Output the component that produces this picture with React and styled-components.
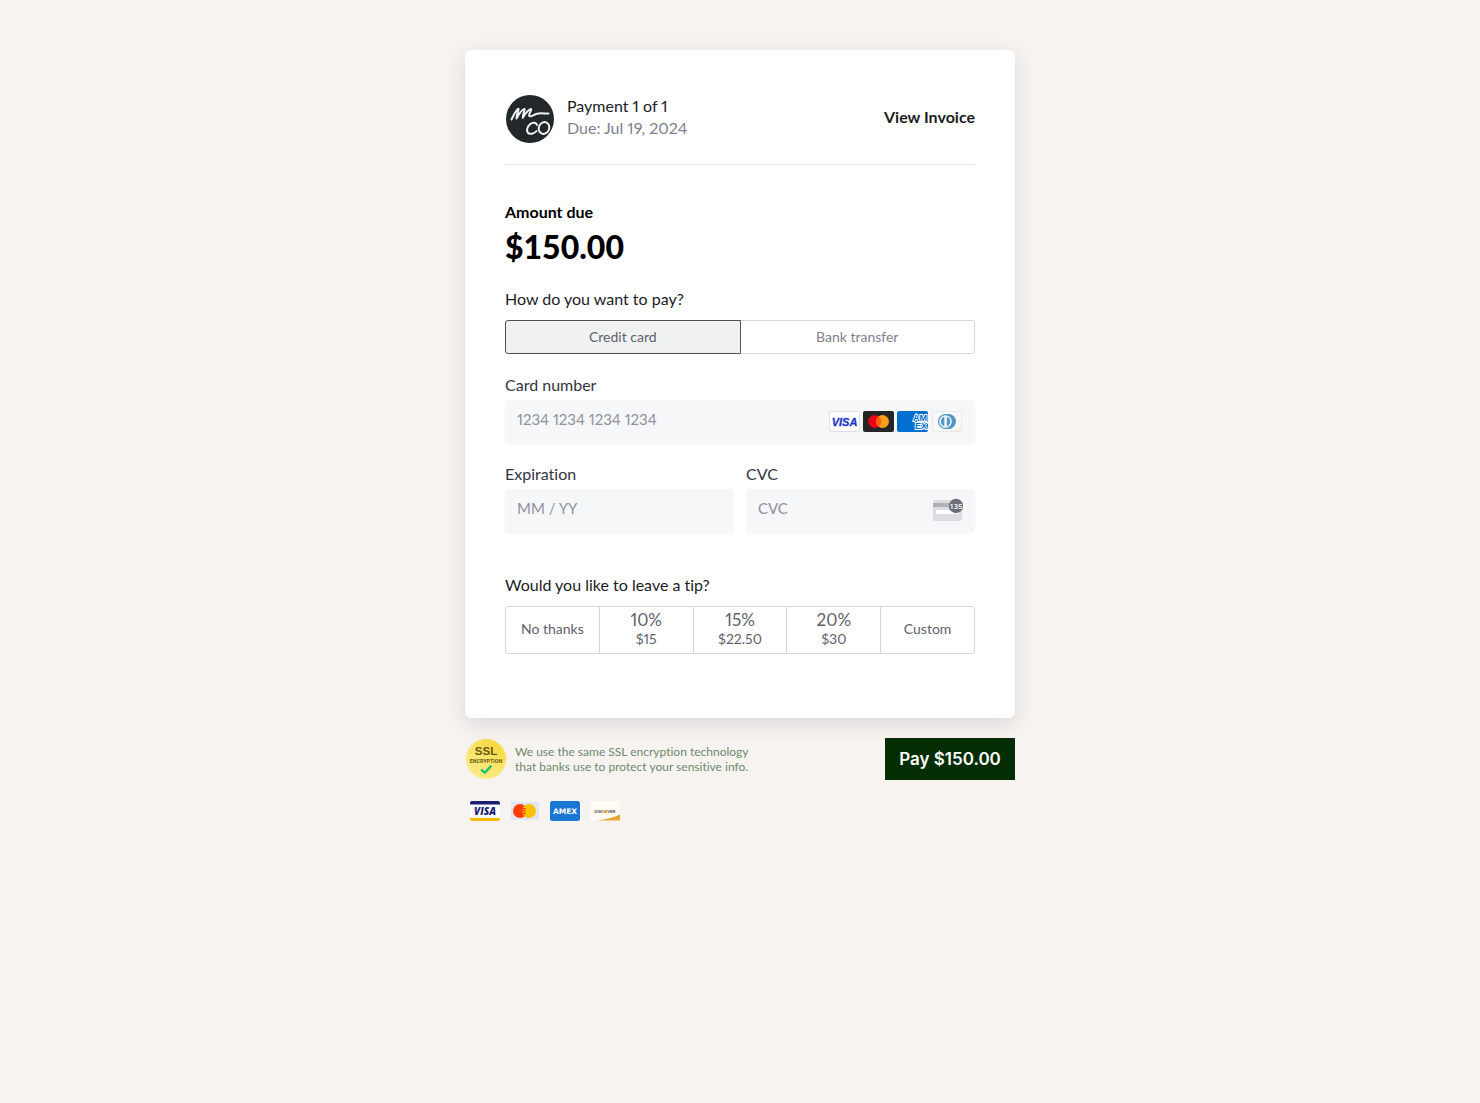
import React, { useState } from "react";
import styled, { createGlobalStyle } from "styled-components";

const GlobalStyle = createGlobalStyle`
  * {
    box-sizing: border-box;
  }
  body {
    margin: 0;
    background: #f7f3f0;
    font-family: Lato, "Open Sans", sans-serif;
    font-size: 16px;
    line-height: 24px;
    font-variant-ligatures: none;
    color: #1b1c1e;
  }
  button,
  input {
    font-family: inherit;
  }
`;

const Page = styled.main`
  max-width: 550px;
  margin: 0 auto;
  padding: 50px 0;
`;

const Card = styled.section`
  padding: 45px 40px 64px;
  border-radius: 6px;
  background: #fff;
  box-shadow: 0 6px 20px rgba(60, 50, 80, 0.14);
`;

const Header = styled.header`
  display: flex;
  align-items: center;
  gap: 12px;
  padding-bottom: 21px;
  border-bottom: 1px solid #ebebed;
`;

const Avatar = styled.svg`
  display: block;
  width: 50px;
  height: 48px;
`;

const PaymentInfo = styled.div`
  flex: 1;
  padding-bottom: 4px;
  line-height: 22px;
  font-variant-numeric: proportional-nums;

  p {
    margin: 0;
  }
  p + p {
    color: #7f818e;
  }
`;

const InvoiceLink = styled.a`
  padding-bottom: 4px;
  font-weight: bold;
  color: #1b1c1e;
  text-decoration: none;
`;

const Amount = styled.div`
  margin: 35px 0 17px;
  color: #000;

  h2 {
    margin: 0;
    font-size: 16px;
    line-height: 24px;
    font-weight: bold;
  }
  p {
    margin: 0;
    font-size: 32px;
    line-height: 46px;
    font-weight: 900;
  }
`;

const Question = styled.h3`
  margin: 0 0 9px;
  font-size: 16px;
  line-height: 24px;
  font-weight: normal;
`;

const Methods = styled.div`
  display: flex;
  margin-bottom: 19px;
`;

const Method = styled.button`
  flex: 1;
  height: 34px;
  padding: 0 0 2px;
  border: 1px solid ${(props) => (props.$active ? "#4f505e" : "#d6d8dc")};
  border-radius: ${(props) => (props.$active ? "3px 0 0 3px" : "0 3px 3px 0")};
  background: ${(props) => (props.$active ? "#f0f2f2" : "#fff")};
  font-size: 14px;
  color: ${(props) => (props.$active ? "#5f616e" : "#7f818e")};
  cursor: pointer;

  & + & {
    border-left: 0;
  }
`;

const Fields = styled.div`
  display: grid;
  grid-template-columns: repeat(2, minmax(0, 1fr));
  gap: 18px 12px;
  margin-bottom: 40px;
`;

const Field = styled.div`
  grid-column: ${(props) => (props.$wide ? "1 / -1" : "auto")};

  label {
    display: block;
    margin-bottom: 3px;
    color: #33343f;
  }
`;

const InputBox = styled.div`
  display: flex;
  align-items: center;
  height: 44px;
  padding-right: 12px;
  border-radius: 5px;
  background: #f6f7f9;
  box-shadow: 0 1px 2px rgba(0, 0, 0, 0.04);
`;

const Input = styled.input`
  flex: 1;
  min-width: 0;
  height: 44px;
  padding: 0 0 6px 12px;
  border: 0;
  outline: 0;
  background: transparent;
  font-size: 15px;
  font-variant-numeric: proportional-nums;
  color: #33343f;

  &::placeholder {
    color: #8f919e;
    opacity: 1;
  }
`;

const Brands = styled.div`
  display: flex;
  gap: 3px;
  padding: 0 1px 2px 0;
`;

const Tips = styled.div`
  display: flex;
  border: 1px solid #d6d8dc;
  border-radius: 3px;
`;

const Tip = styled.button`
  flex: 1;
  height: 46px;
  padding: 0 0 2px;
  border: 0;
  background: transparent;
  font-size: 14px;
  line-height: 18px;
  font-variant-numeric: proportional-nums;
  color: #5f616e;
  cursor: pointer;

  & + & {
    border-left: 1px solid #d6d8dc;
  }
  strong {
    display: block;
    font-size: 17px;
    line-height: 20px;
    font-weight: normal;
  }
`;

const Footer = styled.footer`
  display: flex;
  align-items: center;
  gap: 8px;
  margin-top: 20px;

  p {
    flex: 1;
    margin: 0;
    font-size: 12px;
    line-height: 15px;
    color: #6c8a6e;
  }
`;

const PayButton = styled.button`
  height: 42px;
  width: 130px;
  padding: 0;
  border: 0;
  background: #042d04;
  font-family: Inter, sans-serif;
  font-size: 17px;
  font-weight: 600;
  color: #fff;
  cursor: pointer;
`;

const Accepted = styled.div`
  display: flex;
  gap: 10px;
  padding: 21px 5px 0;
`;

const Icon = styled.svg`
  display: block;
`;

function Logo() {
  return (
    <Avatar viewBox="0 0 50 48" fill="none" role="img" aria-label="M Co">
      <circle cx="25" cy="24" r="24" fill="#222729" />
      <g stroke="#f1f3f3" strokeLinecap="round" strokeLinejoin="round">
        <path
          d="M6.500 24.500C8.500 20.500 11 15 13.500 13.700C14.300 14.500 11.500 19.500 11.500 23.500C14 19 17 14.500 19.500 13.900C20.500 14.500 17.500 19 17.800 22.800C20 19 23.500 14.500 26 14C27.500 14.500 22.500 20 24.500 21.200C26.500 22.200 29 19 33.500 18.500C37.500 18 40 18.800 43.500 18.500"
          strokeWidth="2"
        />
        <path
          d="M32 30C31.500 27.500 28 26.800 25 29.200C21.500 32.200 21 37 24 38.500C26.500 39.500 30 38 31.500 36"
          strokeWidth="2"
        />
        <ellipse
          cx="39"
          cy="33"
          rx="5.200"
          ry="6"
          transform="rotate(25 39 33)"
          strokeWidth="2"
        />
      </g>
    </Avatar>
  );
}

function FieldVisa() {
  return (
    <Icon width="31" height="21" viewBox="0 0 31 21" role="img" aria-label="Visa">
      <rect x="0.500" y="0.500" width="30" height="20" rx="1.500" fill="#fff" stroke="#e0e1e4" />
      <text x="15.500" y="15" textAnchor="middle" fontFamily="Liberation Sans" fontSize="11" fontWeight="bold" fontStyle="italic" fill="#2337c6" stroke="#2337c6" strokeWidth="0.300">
        VISA
      </text>
    </Icon>
  );
}

function FieldMastercard() {
  return (
    <Icon width="31" height="21" viewBox="0 0 31 21" role="img" aria-label="Mastercard">
      <rect width="31" height="21" rx="2" fill="#252525" />
      <circle cx="11.700" cy="10.500" r="6.500" fill="#eb001b" />
      <circle cx="19.500" cy="10.500" r="6.500" fill="#f79e1b" />
      <path d="M15.600 5.300a6.500 6.500 0 0 1 0 10.400a6.500 6.500 0 0 1 0-10.400z" fill="#ff5f00" />
    </Icon>
  );
}

function FieldAmex() {
  return (
    <Icon width="31" height="21" viewBox="0 0 31 21" role="img" aria-label="American Express">
      <rect width="31" height="21" rx="2" fill="#016fd0" />
      <g fontFamily="Liberation Sans" fontSize="9" fontWeight="bold" fill="#016fd0" stroke="#fff" strokeWidth="1.800" paintOrder="stroke">
        <text x="16" y="10">AM</text>
        <text x="18" y="18">EX</text>
      </g>
    </Icon>
  );
}

function FieldDiners() {
  return (
    <Icon width="31" height="21" viewBox="0 0 31 21" role="img" aria-label="Diners Club">
      <rect x="1.500" y="0.500" width="29" height="20" rx="1.500" fill="#f9f9fa" stroke="#e9e9ec" />
      <path d="M20 20L30 16v4z" fill="#fdeee0" />
      <path d="M14.500 3h3a7.500 7.500 0 0 1 0 15h-3a7.500 7.500 0 0 1 0-15z" fill="#4d98c6" />
      <circle cx="14.500" cy="10.500" r="6.300" fill="#eef4f8" />
      <path d="M13.300 5.800v9.400a5 5 0 0 1 0-9.400zM15.900 5.800a5 5 0 0 1 0 9.400z" fill="#4d98c6" />
    </Icon>
  );
}

function CvcIcon() {
  return (
    <Icon width="31" height="26" viewBox="0 0 31 26" aria-hidden="true">
      <rect x="1" y="2" width="29" height="21" rx="2" fill="#dcdde0" />
      <path d="M1 5h29v4H1z" fill="#b0b1b5" />
      <rect x="4" y="12" width="23" height="4" rx="1" fill="#fff" />
      <circle cx="24" cy="8" r="7.200" fill="#6d6e78" />
      <text x="24" y="11" textAnchor="middle" fontFamily="Open Sans" fontSize="7.500" fontWeight="600" fill="#fff">
        135
      </text>
    </Icon>
  );
}

// zigzag edge of the seal, 40 teeth
const sealPoints = Array.from({ length: 80 }, (_, i) => {
  const r = i % 2 ? 19 : 21;
  const a = (i * Math.PI) / 40;
  return `${(21 + r * Math.cos(a)).toFixed(2)},${(21 + r * Math.sin(a)).toFixed(2)}`;
}).join(" ");

function Seal() {
  return (
    <Icon width="42" height="42" viewBox="0 0 42 42" role="img" aria-label="SSL encryption">
      <defs>
        <linearGradient id="gold" x1="1" y1="0" x2="0.300" y2="1">
          <stop offset="0" stopColor="#f6cf1f" />
          <stop offset="0.500" stopColor="#fae366" />
          <stop offset="1" stopColor="#fbea86" />
        </linearGradient>
      </defs>
      <polygon points={sealPoints} fill="url(#gold)" />
      <g fill="#6a5a0c" textAnchor="middle" fontWeight="bold">
        <text x="21" y="17" fontFamily="Liberation Sans" fontSize="11.500">
          SSL
        </text>
        <text x="21" y="25" fontFamily="Roboto" fontSize="5.300">
          ENCRYPTION
        </text>
      </g>
      <path d="M16 31.500l3.800 3.300l6.500-7" fill="none" stroke="#10bf70" strokeWidth="2.200" />
    </Icon>
  );
}

function VisaBadge() {
  return (
    <Icon width="30" height="20" viewBox="0 0 30 20" role="img" aria-label="Visa">
      <rect width="30" height="20" rx="2" fill="#fff" />
      <path d="M0 3.500V2a2 2 0 0 1 2-2h26a2 2 0 0 1 2 2v1.500z" fill="#1a1f71" />
      <path d="M0 17v1a2 2 0 0 0 2 2h26a2 2 0 0 0 2-2v-1z" fill="#fbb80b" />
      <text x="15" y="14" textAnchor="middle" fontFamily="Open Sans" fontSize="10" fontWeight="800" fontStyle="italic" fill="#1a1f71">
        VISA
      </text>
    </Icon>
  );
}

function MastercardBadge() {
  return (
    <Icon width="30" height="20" viewBox="0 0 30 20" role="img" aria-label="Mastercard">
      <rect x="1" y="1" width="28" height="18" rx="1" fill="#e3e5f0" />
      <circle cx="10" cy="10" r="7" fill="#ff3d00" />
      <circle cx="19" cy="10" r="7" fill="#ffc107" />
      <path d="M11.500 7.500h4.500M11.500 9.200h4M11.500 10.900h4M11.500 12.600h4.500" stroke="#ff3d00" strokeWidth="0.900" />
    </Icon>
  );
}

function AmexBadge() {
  return (
    <Icon width="30" height="20" viewBox="0 0 30 20" role="img" aria-label="American Express">
      <rect width="30" height="20" rx="2.500" fill="#1976d2" />
      <text x="15" y="12.500" textAnchor="middle" fontFamily="DejaVu Sans" fontSize="7.500" fontWeight="bold" fill="#fff">
        AMEX
      </text>
    </Icon>
  );
}

function DiscoverBadge() {
  return (
    <Icon width="30" height="20" viewBox="0 0 30 20" role="img" aria-label="Discover">
      <rect width="30" height="20" rx="2" fill="#fffaf3" />
      <path d="M7 19.500C16 18.500 24 16.500 30 13.500V19.500z" fill="#e5a435" />
      <text x="15" y="12" textAnchor="middle" fontFamily="Liberation Sans" fontSize="4" fontWeight="bold" fill="#4c4c4c">
        DISC<tspan fill="#e99a1c">O</tspan>VER
      </text>
      <circle cx="15.600" cy="10.600" r="1.300" fill="#e99a1c" />
    </Icon>
  );
}

const methods = ["Credit card", "Bank transfer"];

const tips = [
  { label: "No thanks" },
  { percent: "10%", label: "$15" },
  { percent: "15%", label: "$22.50" },
  { percent: "20%", label: "$30" },
  { label: "Custom" },
];

function App() {
  const [method, setMethod] = useState("Credit card");

  return (
    <>
      <GlobalStyle />
      <Page>
        <Card>
          <Header>
            <Logo />
            <PaymentInfo>
              <p>Payment 1 of 1</p>
              <p>Due: Jul 19, 2024</p>
            </PaymentInfo>
            <InvoiceLink href="#invoice">View Invoice</InvoiceLink>
          </Header>

          <Amount>
            <h2>Amount due</h2>
            <p>$150.00</p>
          </Amount>

          <Question>How do you want to pay?</Question>
          <Methods>
            {methods.map((name) => (
              <Method
                key={name}
                type="button"
                $active={name === method}
                aria-pressed={name === method}
                onClick={() => setMethod(name)}
              >
                {name}
              </Method>
            ))}
          </Methods>

          <Fields>
            <Field $wide>
              <label htmlFor="number">Card number</label>
              <InputBox>
                <Input id="number" placeholder="1234 1234 1234 1234" />
                <Brands>
                  <FieldVisa />
                  <FieldMastercard />
                  <FieldAmex />
                  <FieldDiners />
                </Brands>
              </InputBox>
            </Field>
            <Field>
              <label htmlFor="expiration">Expiration</label>
              <InputBox>
                <Input id="expiration" placeholder="MM / YY" />
              </InputBox>
            </Field>
            <Field>
              <label htmlFor="cvc">CVC</label>
              <InputBox>
                <Input id="cvc" placeholder="CVC" />
                <CvcIcon />
              </InputBox>
            </Field>
          </Fields>

          <Question>Would you like to leave a tip?</Question>
          <Tips>
            {tips.map((tip) => (
              <Tip key={tip.label} type="button">
                {tip.percent && <strong>{tip.percent}</strong>}
                {tip.label}
              </Tip>
            ))}
          </Tips>
        </Card>

        <Footer>
          <Seal />
          <p>
            We use the same SSL encryption technology
            <br />
            that banks use to protect your sensitive info.
          </p>
          <PayButton type="button">Pay $150.00</PayButton>
        </Footer>

        <Accepted>
          <VisaBadge />
          <MastercardBadge />
          <AmexBadge />
          <DiscoverBadge />
        </Accepted>
      </Page>
    </>
  );
}

export default App;
